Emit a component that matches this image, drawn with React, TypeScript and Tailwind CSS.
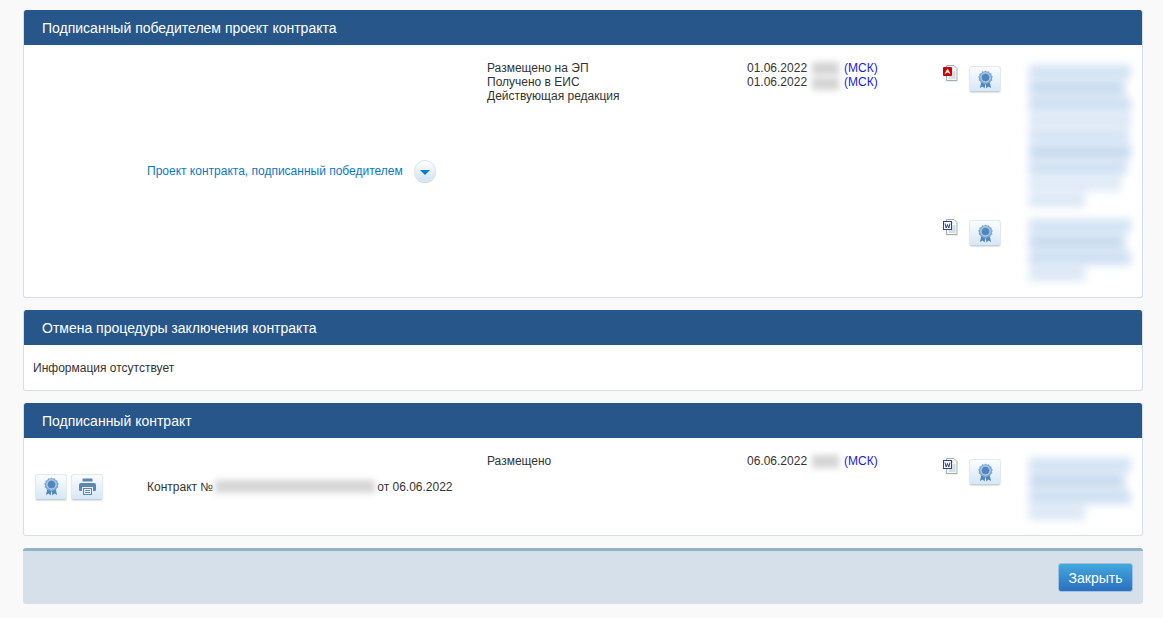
// Contract documents view: three panels and the bottom action bar.

// Tones and lengths for the blurred document names, uneven on purpose
const BLUR_LINES = [
  "h-[14px] w-full bg-[#d3e3f3]",
  "h-[14px] w-[94%] bg-[#c9dcf0]",
  "h-[14px] w-full bg-[#cfe0f2]",
  "h-[14px] w-full bg-[#dce8f5]",
  "h-[14px] w-[98%] bg-[#d6e4f4]",
  "h-[14px] w-full bg-[#c8dbef]",
  "h-[14px] w-[96%] bg-[#d1e1f2]",
  "h-[14px] w-[90%] bg-[#dfeaf6]",
];

function MedalIcon() {
  return (
    <svg width="15" height="19" viewBox="0 0 16 20">
      <path d="M4 11 L2 19 L5 17.5 L7 19.5 L8 14 L9 19.5 L11 17.5 L14 19 L12 11 Z" fill="#4f86c0" />
      <path
        d="M8 0.5 L9.6 1.8 L11.6 1.3 L12.4 3.2 L14.4 3.6 L14.4 5.7 L15.8 7 L14.8 8.8 L15.4 10.8 L13.6 11.8 L13 13.7 L11 13.6 L9.5 15 L8 14.2 L6.5 15 L5 13.6 L3 13.7 L2.4 11.8 L0.6 10.8 L1.2 8.8 L0.2 7 L1.6 5.7 L1.6 3.6 L3.6 3.2 L4.4 1.3 L6.4 1.8 Z"
        fill="#7ba6d2"
      />
      <circle cx="8" cy="7.8" r="5" fill="none" stroke="#c4d9ee" strokeWidth="1" />
      <circle cx="8" cy="7.8" r="3.8" fill="#4f86c0" />
    </svg>
  );
}

function PrinterIcon() {
  return (
    <svg width="17" height="17" viewBox="0 0 17 17">
      <rect x="3.5" y="0.5" width="10" height="3" rx="0.5" fill="#5b87b0" />
      <path d="M2 5 H15 Q17 5 17 7 V12 Q17 13 16 13 H14 V9 H3 V13 H1 Q0 13 0 12 V7 Q0 5 2 5 Z" fill="#5b87b0" />
      <rect x="4" y="10" width="9" height="7" fill="#5b87b0" />
      <rect x="5" y="11" width="7" height="5" fill="#eaf3fa" />
      <path d="M6 12.5 H11 M6 14.5 H11" stroke="#5b87b0" strokeWidth="1" />
    </svg>
  );
}

// File type icon: a grey sheet with a coloured badge in the top left corner
function FileIcon({ type }: { type: "pdf" | "doc" }) {
  return (
    <svg width="16" height="17" viewBox="0 0 16 17">
      <rect x="2" y="15.5" width="13" height="1" fill="#dfe3e3" />
      <path d="M3.5 0.5 H11 L14 3.5 V15.5 H3.5 Z" fill="#f7f9f9" stroke="#9fb0b0" />
      <path d="M8 7 H12.5 M8 9 H12.5 M6 11 H12.5 M6 13 H12.5 M8 4 H10" stroke="#b5c4c4" strokeWidth="1" />
      {type === "pdf" ? (
        <>
          <rect x="0" y="2" width="9" height="9" rx="1" fill="#cc0000" />
          <path d="M1.5 9 L4.5 3.5 L7.5 9 L4.5 7.5 Z" fill="#ffffff" />
        </>
      ) : (
        <>
          <rect x="0.5" y="2.5" width="8" height="8" fill="#ffffff" stroke="#2b3f9e" />
          <path d="M2 4.5 L3.2 9 L4.5 5.5 L5.8 9 L7 4.5" fill="none" stroke="#2b3f9e" strokeWidth="1" />
        </>
      )}
    </svg>
  );
}

function IconButton({ children }: { children: React.ReactNode }) {
  return (
    <button className="flex h-[26px] w-[32px] items-center justify-center rounded-[3px] border border-[#e2e8ec] border-b-[#c5d0d8] bg-gradient-to-b from-[#fbfdfe] to-[#d6e7f5] shadow-[0_1px_1px_rgba(0,0,0,0.12)]">
      {children}
    </button>
  );
}

function Panel({ title, children }: { title: string; children: React.ReactNode }) {
  return (
    <section className="overflow-hidden rounded-[3px] border border-t-0 border-[#d3e0e8] bg-white">
      <h2 className="-mx-px h-[35px] rounded-t-[3px] bg-[#27568a] pl-[19px] text-[14px] leading-[36px] font-normal text-white">
        {title}
      </h2>
      {children}
    </section>
  );
}

// Blurred time next to a date
function BlurTime() {
  return <span className="mx-[5px] inline-block h-[13px] w-[27px] bg-[#d4d4d4] align-middle blur-[3px]" />;
}

function DateLine({ date }: { date: string }) {
  return (
    <div>
      {date}
      <BlurTime />
      <span className="text-[#1a1ae0]">(МСК)</span>
    </div>
  );
}

// Blurred document name: a stack of soft blue lines, the last one short
function BlurText({ lines }: { lines: number }) {
  return (
    <div className="flex w-[102px] flex-col gap-[2px] blur-[4px]">
      {Array.from({ length: lines }).map((_, i) => (
        <div key={i} className={i === lines - 1 ? "h-[14px] w-[55%] bg-[#dbe8f5]" : BLUR_LINES[i]} />
      ))}
    </div>
  );
}

function DocRow({
  type,
  lines,
  blurLines,
}: {
  type: "pdf" | "doc";
  lines?: React.ReactNode[];
  blurLines: number;
}) {
  return (
    <div className="flex">
      <div className="w-[260px]">{lines?.[0]}</div>
      <div className="w-[196px]">{lines?.[1]}</div>
      <div className="w-[26px] pt-[5px]">
        <FileIcon type={type} />
      </div>
      <div className="w-[60px] pt-[6px]">
        <IconButton>
          <MedalIcon />
        </IconButton>
      </div>
      <div className="pt-[5px]">
        <BlurText lines={blurLines} />
      </div>
    </div>
  );
}

export default function App() {
  return (
    <div
      className="flex h-[618px] flex-col gap-[12px] bg-[#f9f9f9] pt-[10px] pr-[20px] pl-[23px] text-[12px] leading-[14px] text-[#333333]"
      style={{ fontFamily: '"Liberation Sans", sans-serif' }}
    >
      <Panel title="Подписанный победителем проект контракта">
        <div className="flex h-[252px]">
          <div className="flex w-[463px] items-center pl-[123px]">
            <a href="#" className="text-[#0a78c8]">
              Проект контракта, подписанный победителем
            </a>
            <span className="ml-[11px] flex h-[22px] w-[22px] items-center justify-center rounded-full border border-[#dce6ec] bg-gradient-to-b from-white to-[#cfe4f4] shadow-[0_1px_1px_rgba(0,0,0,0.2)]">
              <span className="mt-[2px] border-x-[5px] border-t-[5px] border-x-transparent border-t-[#0a78c8]" />
            </span>
          </div>
          <div className="flex flex-col gap-[7px] pt-[15px]">
            <DocRow
              type="pdf"
              blurLines={9}
              lines={[
                <div key="a" className="pt-px">
                  <div>Размещено на ЭП</div>
                  <div>Получено в ЕИС</div>
                  <div>Действующая редакция</div>
                </div>,
                <div key="b" className="pt-px">
                  <DateLine date="01.06.2022" />
                  <DateLine date="01.06.2022" />
                </div>,
              ]}
            />
            <DocRow type="doc" blurLines={4} />
          </div>
        </div>
      </Panel>

      <Panel title="Отмена процедуры заключения контракта">
        <div className="flex h-[45px] items-center pl-[9px]">Информация отсутствует</div>
      </Panel>

      <Panel title="Подписанный контракт">
        <div className="flex h-[97px]">
          <div className="flex w-[463px] items-center">
            <div className="flex w-[123px] gap-[4px] pl-[11px]">
              <IconButton>
                <MedalIcon />
              </IconButton>
              <IconButton>
                <PrinterIcon />
              </IconButton>
            </div>
            <span>Контракт №</span>
            <span className="mx-[2px] inline-block h-[13px] w-[160px] bg-[#d6d6d6] blur-[3px]" />
            <span>от 06.06.2022</span>
          </div>
          <div className="pt-[15px]">
            <DocRow
              type="doc"
              blurLines={4}
              lines={[
                <div key="a" className="pt-px">
                  Размещено
                </div>,
                <div key="b" className="pt-px">
                  <DateLine date="06.06.2022" />
                </div>,
              ]}
            />
          </div>
        </div>
      </Panel>

      <div className="flex h-[56px] items-center justify-end rounded-[3px] border-t-[3px] border-[#93b2c6] bg-[#d5e0ea] pr-[10px]">
        <button className="h-[29px] w-[75px] rounded-[3px] border border-[#9fc3de] bg-gradient-to-b from-[#43a8de] to-[#2b6fc0] text-[14px] text-white">
          Закрыть
        </button>
      </div>
    </div>
  );
}
